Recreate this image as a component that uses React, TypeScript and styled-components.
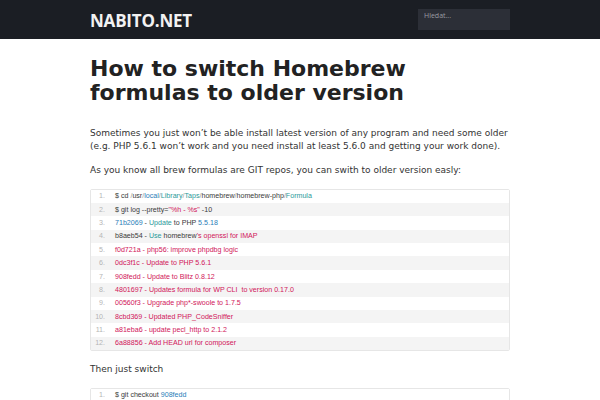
import React from "react";
import styled, { createGlobalStyle } from "styled-components";

const GlobalStyle = createGlobalStyle`
  html, body {
    margin: 0;
    padding: 0;
    background: #fff;
    font-family: "DejaVu Sans", sans-serif;
    color: #333;
  }
`;

const Header = styled.header`
  background: #1b1e24;
  height: 39px;
`;

const HeaderInner = styled.div`
  width: 420px;
  margin: 0 auto;
  height: 100%;
  display: flex;
  align-items: center;
  justify-content: space-between;
`;

const Logo = styled.a`
  color: #f2f2f2;
  font-family: "Open Sans", sans-serif;
  font-weight: 700;
  font-size: 17px;
  letter-spacing: -0.2px;
  text-decoration: none;
  margin-top: 1px;
`;

const Search = styled.input`
  width: 92px;
  height: 21px;
  box-sizing: border-box;
  border: 0;
  background: #2c2f37;
  color: #ccc;
  font-family: "Open Sans", sans-serif;
  font-size: 7px;
  padding: 0 6px 8px;
  outline: none;
  &::placeholder {
    color: #9a9ca2;
  }
`;

const Main = styled.main`
  width: 420px;
  margin: 0 auto;
  padding-top: 18px;
`;

const Title = styled.h1`
  font-family: "DejaVu Sans", sans-serif;
  font-weight: 700;
  font-size: 22px;
  line-height: 24px;
  color: #222;
  margin: 0 0 22px;
`;

const Para = styled.p`
  font-size: 9px;
  line-height: 12.5px;
  color: #333;
  margin: 0 0 12px;
`;

const CodeBox = styled.ol`
  list-style: none;
  margin: 0 0 12px;
  padding: 0;
  border: 1px solid #e6e6e6;
  border-radius: 2px;
  font-family: "Liberation Sans", Arial, sans-serif;
  font-size: 7.1px;
`;

const Row = styled.li<{ $alt: boolean }>`
  display: flex;
  align-items: center;
  height: 13.4px;
  background: ${(p) => (p.$alt ? "#f4f4f4" : "#fff")};
  color: #3a3a3a;
  white-space: pre;
`;

const Num = styled.span`
  width: 14px;
  text-align: right;
  color: #b5b5b5;
`;

const Code = styled.span`
  padding-left: 10px;
`;

const Tok = styled.span<{ $c: string }>`
  color: ${(p) => p.$c};
`;

const pink = "#d1165a";
const teal = "#2a9a9a";
const blue = "#2a7db8";
const grey = "#999";

type Part = [string, string?];

const block1: Part[][] = [
  [["$ cd "], ["/", grey], ["usr"], ["/", grey], ["local", blue], ["/", grey], ["Library", teal], ["/", grey], ["Taps", teal], ["/", grey], ["homebrew"], ["/", grey], ["homebrew-php"], ["/", grey], ["Formula", teal]],
  [["$ git log --pretty="], ['"%h - %s"', pink], [" -10"]],
  [["71b2069", blue], [" - "], ["Update", teal], [" to PHP "], ["5.5.18", blue]],
  [["b8aeb54"], [" - "], ["Use", teal], [" homebrew"], ["'s openssl for IMAP", pink]],
  [["f0d721a - php56: improve phpdbg logic", pink]],
  [["0dc3f1c - Update to PHP 5.6.1", pink]],
  [["908fedd - Update to Blitz 0.8.12", pink]],
  [["4801697 - Updates formula for WP CLI  to version 0.17.0", pink]],
  [["00560f3 - Upgrade php*-swoole to 1.7.5", pink]],
  [["8cbd369 - Updated PHP_CodeSniffer", pink]],
  [["a81eba6 - update pecl_http to 2.1.2", pink]],
  [["6a88856 - Add HEAD url for composer", pink]],
];

const block2: Part[][] = [[["$ git checkout "], ["908fedd", blue]]];

const CodeBlock: React.FC<{ lines: Part[][] }> = ({ lines }) => (
  <CodeBox>
    {lines.map((parts, i) => (
      <Row key={i} $alt={i % 2 === 1}>
        <Num>{i + 1}.</Num>
        <Code>
          {parts.map(([t, c], j) =>
            c ? (
              <Tok key={j} $c={c}>
                {t}
              </Tok>
            ) : (
              <React.Fragment key={j}>{t}</React.Fragment>
            )
          )}
        </Code>
      </Row>
    ))}
  </CodeBox>
);

export default function App() {
  return (
    <>
      <GlobalStyle />
      <Header>
        <HeaderInner>
          <Logo href="#">NABITO.NET</Logo>
          <Search placeholder="Hledat..." />
        </HeaderInner>
      </Header>
      <Main>
        <Title>How to switch Homebrew formulas to older version</Title>
        <Para>
          Sometimes you just won’t be able install latest version of any program and need some older
          (e.g. PHP 5.6.1 won’t work and you need install at least 5.6.0 and getting your work done).
        </Para>
        <Para>As you know all brew formulas are GIT repos, you can swith to older version easly:</Para>
        <CodeBlock lines={block1} />
        <Para>Then just switch</Para>
        <CodeBlock lines={block2} />
      </Main>
    </>
  );
}
